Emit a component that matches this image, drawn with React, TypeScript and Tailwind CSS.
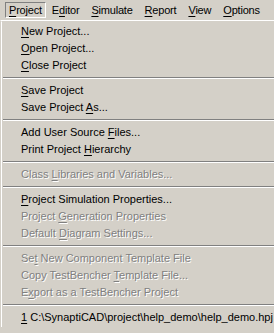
import React from "react";

type Item =
    | { sep: true }
    | { label: string; u: number; off?: boolean; sep?: false };

const bar: { label: string; u: number }[] = [
    { label: "Project", u: 0 },
    { label: "Editor", u: 1 },
    { label: "Simulate", u: 0 },
    { label: "Report", u: 0 },
    { label: "View", u: 0 },
    { label: "Options", u: 0 },
];

const menu: Item[] = [
    { label: "New Project...", u: 0 },
    { label: "Open Project...", u: 0 },
    { label: "Close Project", u: 0 },
    { sep: true },
    { label: "Save Project", u: 0 },
    { label: "Save Project As...", u: 13 },
    { sep: true },
    { label: "Add User Source Files...", u: 16 },
    { label: "Print Project Hierarchy", u: 14 },
    { sep: true },
    { label: "Class Libraries and Variables...", u: 6, off: true },
    { sep: true },
    { label: "Project Simulation Properties...", u: 0 },
    { label: "Project Generation Properties", u: 8, off: true },
    { label: "Default Diagram Settings...", u: 8, off: true },
    { sep: true },
    { label: "Set New Component Template File", u: 2, off: true },
    { label: "Copy TestBencher Template File...", u: 17, off: true },
    { label: "Export as a TestBencher Project", u: 1, off: true },
    { sep: true },
    { label: "1 C:\\SynaptiCAD\\project\\help_demo\\help_demo.hpj", u: 0 },
];

function Mn({ label, u }: { label: string; u: number }) {
    return (
        <>
            {label.slice(0, u)}
            <span className="underline underline-offset-[2px]">{label[u]}</span>
            {label.slice(u + 1)}
        </>
    );
}

export default function App() {
    return (
        <div className="w-[274px] h-[333px] overflow-hidden bg-[#d4d0c8] font-['Tahoma','Liberation_Sans',sans-serif] text-[11px] text-black">
            {/* menu bar */}
            <div className="flex h-[20px] items-start pt-[2px] pl-[5px] tracking-[-0.2px]">
                {bar.map((b, i) => (
                    <div
                        key={i}
                        className={
                            i === 0
                                ? "h-[16px] px-[3px] leading-[14px] border border-t-[#808080] border-l-[#808080] border-b-white border-r-white"
                                : "h-[16px] px-[6px] leading-[16px]"
                        }
                    >
                        <Mn label={b.label} u={b.u} />
                    </div>
                ))}
            </div>

            {/* dropdown */}
            <div className="border-t border-l border-t-white border-l-[#d4d0c8]">
                <div className="border-l border-t border-l-white border-t-[#d4d0c8] py-[1px]">
                    {menu.map((m, i) =>
                        m.sep ? (
                            <div key={i} className="h-[8px] pt-[3px] pl-[1px]">
                                <div className="h-[1px] bg-[#808080]" />
                                <div className="h-[1px] bg-white" />
                            </div>
                        ) : (
                            <div
                                key={i}
                                className={
                                    "h-[17px] leading-[17px] pl-[19px] whitespace-nowrap " +
                                    (m.off ? "text-[#808080] [text-shadow:1px_1px_0_#fff]" : "")
                                }
                            >
                                <Mn label={m.label} u={m.u} />
                            </div>
                        )
                    )}
                </div>
            </div>
        </div>
    );
}
